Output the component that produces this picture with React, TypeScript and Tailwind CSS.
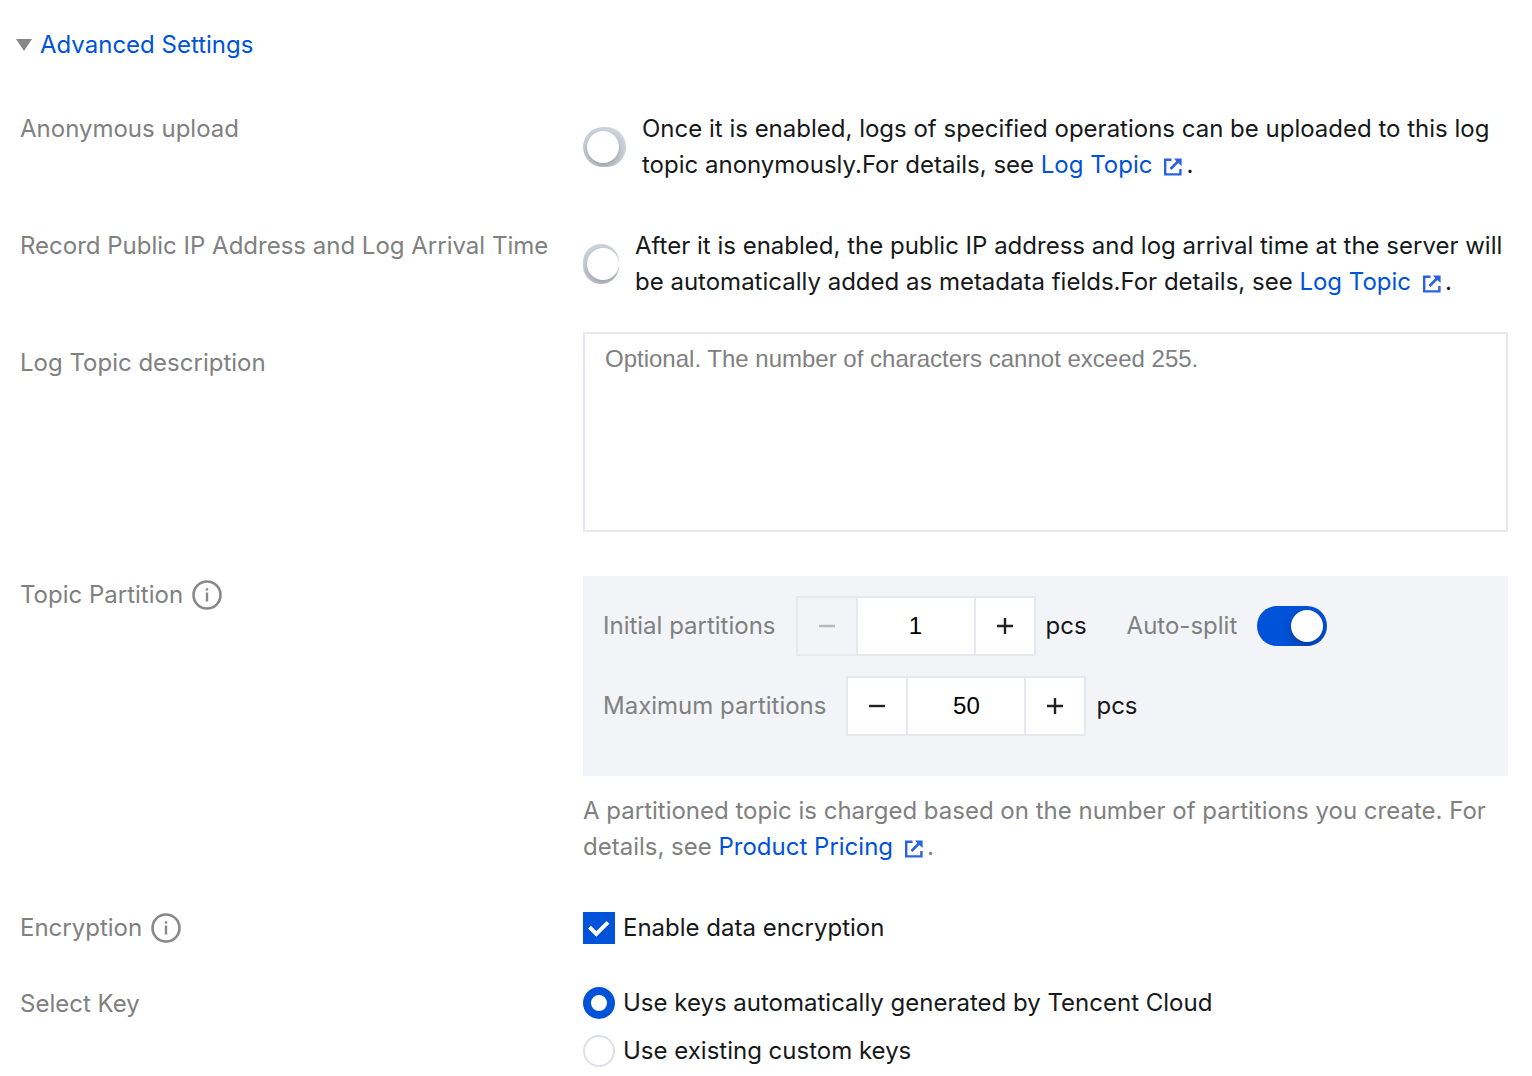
import { useState, type ReactNode } from "react";

type RowProps = {
  label: ReactNode;
  htmlFor?: string;
  info?: boolean;
  className?: string;
  labelClassName?: string;
  children: ReactNode;
};

type StepperProps = {
  id: string;
  label: string;
  value: number;
  min: number;
  onChange: (value: number) => void;
};

const keyOptions = [
  { value: "auto", label: "Use keys automatically generated by Tencent Cloud" },
  { value: "custom", label: "Use existing custom keys" },
];

function InfoIcon() {
  return (
    <svg className="size-[30px] shrink-0 text-[#888]" viewBox="0 0 30 30" fill="none">
      <circle cx="15" cy="15" r="13.5" stroke="currentColor" strokeWidth="2.6" />
      <path d="M15 12.5V21.5" stroke="currentColor" strokeWidth="2.4" />
      <path d="M15 8.2V10.6" stroke="currentColor" strokeWidth="2.4" />
    </svg>
  );
}

function ExternalIcon() {
  return (
    <svg className="inline-block size-[18px] ml-3 mr-1 align-[-3px]" viewBox="0 0 18 18" fill="none">
      <path d="M7.5 1.8H1.2V16.4H16.4V11" stroke="#2a62e0" strokeWidth="2.4" />
      <path d="M6.5 11L14 3.5" stroke="#2a62e0" strokeWidth="2.6" />
      <path d="M10 0.5H17.6V8L14.8 5.6L12.4 3.2Z" fill="#2a62e0" />
    </svg>
  );
}

function DocLink({ children }: { children: ReactNode }) {
  return (
    <a href="#" className="text-[#0052d9] hover:underline">
      {children}
      <ExternalIcon />
    </a>
  );
}

function Row({ label, htmlFor, info, className = "", labelClassName = "", children }: RowProps) {
  return (
    <div className={`grid grid-cols-[563px_minmax(0,1fr)] ${className}`}>
      <div className={`flex items-center gap-[9px] self-start text-[#808080] ${labelClassName}`}>
        {htmlFor ? <label htmlFor={htmlFor}>{label}</label> : <span>{label}</span>}
        {info && <InfoIcon />}
      </div>
      {children}
    </div>
  );
}

function Switch({ id, label, className }: { id: string; label: string; className: string }) {
  const [on, setOn] = useState(false);
  return (
    <input
      id={id}
      type="checkbox"
      role="switch"
      aria-label={label}
      checked={on}
      onChange={(e) => setOn(e.target.checked)}
      className={`h-10 shrink-0 appearance-none overflow-hidden rounded-[20px] bg-[#cfd5de] p-1 cursor-pointer checked:bg-[#0052d9] before:block before:size-8 before:rounded-full before:bg-white before:shadow-[0_4px_10px_rgba(0,0,0,0.28)] ${className}`}
    />
  );
}

function Stepper({ id, label, value, min, onChange }: StepperProps) {
  const atMin = value <= min;
  return (
    <div className="flex items-center">
      <label htmlFor={id} className="text-[#808080]">{label}</label>
      <div className="ml-5 mr-[10px] flex h-[60px] border-2 border-[#e5e8ef] bg-white">
        <button
          type="button"
          aria-label={`Decrease ${label}`}
          disabled={atMin}
          onClick={() => onChange(value - 1)}
          className="grid w-[58px] place-items-center text-[#222] cursor-pointer disabled:bg-[#f3f4f8] disabled:text-[#b5b7bb]"
        >
          <svg className="size-4" viewBox="0 0 16 16" stroke="currentColor" strokeWidth="2.4">
            <path d="M0 8H16" />
          </svg>
        </button>
        <input
          id={id}
          type="text"
          inputMode="numeric"
          value={value}
          onChange={(e) => onChange(Number(e.target.value) || min)}
          className="w-[120px] border-x-2 border-[#e5e8ef] text-center font-['Liberation_Sans',Arial,sans-serif] text-black outline-none"
        />
        <button
          type="button"
          aria-label={`Increase ${label}`}
          onClick={() => onChange(value + 1)}
          className="grid w-[58px] place-items-center text-[#222] cursor-pointer"
        >
          <svg className="size-4" viewBox="0 0 16 16" stroke="currentColor" strokeWidth="2.4">
            <path d="M0 8H16M8 0V16" />
          </svg>
        </button>
      </div>
      <span>pcs</span>
    </div>
  );
}

export default function App() {
  const [open, setOpen] = useState(true);
  const [initial, setInitial] = useState(1);
  const [maximum, setMaximum] = useState(50);
  const [autoSplit, setAutoSplit] = useState(true);
  const [encrypted, setEncrypted] = useState(true);
  const [keyType, setKeyType] = useState("auto");

  return (
    <main className="min-h-screen bg-white pt-[27px] pr-6 pb-2 pl-5 font-['Inter',sans-serif] text-2xl leading-9 text-[#16181a]">
      <button
        type="button"
        aria-expanded={open}
        onClick={() => setOpen(!open)}
        className="-ml-1 flex items-center gap-2 text-[#0052d9] cursor-pointer"
      >
        <svg className="h-3 w-4" viewBox="0 0 16 12" fill="#888">
          <path d="M0 0H16L8 12Z" />
        </svg>
        Advanced Settings
      </button>

      {open && (
        <form className="mt-12">
          <Row label="Anonymous upload" htmlFor="anonymous">
            <div className="flex items-center gap-4">
              <Switch id="anonymous" label="Anonymous upload" className="w-[43px]" />
              <p>
                Once it is enabled, logs of specified operations can be uploaded to this log topic anonymously.For
                details, see <DocLink>Log Topic</DocLink>.
              </p>
            </div>
          </Row>

          <Row label="Record Public IP Address and Log Arrival Time" htmlFor="record-ip" className="mt-[45px]">
            <div className="flex items-center gap-4">
              <Switch id="record-ip" label="Record Public IP Address and Log Arrival Time" className="w-9" />
              <p>
                After it is enabled, the public IP address and log arrival time at the server will be automatically
                added as metadata fields.For details, see <DocLink>Log Topic</DocLink>.
              </p>
            </div>
          </Row>

          <Row label="Log Topic description" htmlFor="description" className="mt-8" labelClassName="pt-[13px]">
            <textarea
              id="description"
              placeholder="Optional. The number of characters cannot exceed 255."
              maxLength={255}
              className="h-[200px] w-full resize-none border-2 border-[#e5e8ef] px-5 py-[7px] font-['Liberation_Sans',Arial,sans-serif] outline-none placeholder:text-[#808080]"
            />
          </Row>

          <Row label="Topic Partition" info className="mt-11" labelClassName="pt-px">
            <div>
              <div className="flex h-[200px] flex-col gap-5 bg-[#f3f4f8] p-5">
                <div className="flex items-center">
                  <Stepper id="initial" label="Initial partitions" value={initial} min={1} onChange={setInitial} />
                  <label htmlFor="auto-split" className="ml-10 text-[#808080]">Auto-split</label>
                  <input
                    id="auto-split"
                    type="checkbox"
                    role="switch"
                    checked={autoSplit}
                    onChange={(e) => setAutoSplit(e.target.checked)}
                    className="ml-5 h-10 w-[70px] appearance-none overflow-hidden rounded-full bg-[#cfd5de] p-1 cursor-pointer checked:bg-[#0052d9] before:block before:size-8 before:rounded-full before:bg-white before:shadow-[0_4px_10px_rgba(0,0,0,0.28)] checked:before:ml-auto"
                  />
                </div>
                <Stepper id="maximum" label="Maximum partitions" value={maximum} min={1} onChange={setMaximum} />
              </div>
              <p className="mt-[17px] text-[#808080]">
                A partitioned topic is charged based on the number of partitions you create. For details, see{" "}
                <DocLink>Product Pricing</DocLink>.
              </p>
            </div>
          </Row>

          <Row label="Encryption" info className="mt-11" labelClassName="pt-px">
            <label className="flex items-center gap-2 cursor-pointer">
              <span className="grid">
                <input
                  type="checkbox"
                  checked={encrypted}
                  onChange={(e) => setEncrypted(e.target.checked)}
                  className="col-start-1 row-start-1 size-8 appearance-none border-2 border-[#dcdfe8] cursor-pointer checked:border-[#0052d9] checked:bg-[#0052d9]"
                />
                {encrypted && (
                  <svg className="pointer-events-none col-start-1 row-start-1 size-8" viewBox="0 0 32 32" fill="none">
                    <path d="M6.5 15.2L13.3 22L25 10.3" stroke="#fff" strokeWidth="4" />
                  </svg>
                )}
              </span>
              Enable data encryption
            </label>
          </Row>

          <Row label="Select Key" className="mt-[39px]" labelClassName="pt-px">
            <div className="flex flex-col gap-3">
              {keyOptions.map((option) => (
                <label key={option.value} className="flex items-center gap-2 cursor-pointer">
                  <input
                    type="radio"
                    name="key-type"
                    value={option.value}
                    checked={keyType === option.value}
                    onChange={() => setKeyType(option.value)}
                    className="size-8 shrink-0 appearance-none rounded-full border-2 border-[#dcdfe8] bg-white cursor-pointer checked:border-8 checked:border-[#0052d9]"
                  />
                  {option.label}
                </label>
              ))}
            </div>
          </Row>
        </form>
      )}
    </main>
  );
}
